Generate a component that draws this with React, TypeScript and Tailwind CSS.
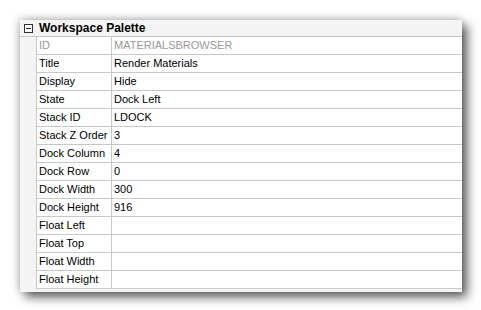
import React from "react";

const rows: [string, string][] = [
  ["ID", "MATERIALSBROWSER"],
  ["Title", "Render Materials"],
  ["Display", "Hide"],
  ["State", "Dock Left"],
  ["Stack ID", "LDOCK"],
  ["Stack Z Order", "3"],
  ["Dock Column", "4"],
  ["Dock Row", "0"],
  ["Dock Width", "300"],
  ["Dock Height", "916"],
  ["Float Left", ""],
  ["Float Top", ""],
  ["Float Width", ""],
  ["Float Height", ""],
];

export default function App() {
  return (
    <div
      className="w-[481px] h-[310px] bg-white pt-[20px] pl-[20px]"
      style={{ fontFamily: '"Liberation Sans", Arial, sans-serif' }}
    >
      <div className="w-[442px] h-[272px] bg-[#f4f4f4] shadow-[5px_5px_10px_rgba(0,0,0,0.65),-2px_-2px_8px_rgba(0,0,0,0.18)] flex flex-col">
        <div className="h-[17px] flex items-center border-b border-[#c8c8c8]">
          <div className="w-[16px] flex justify-center items-center">
            <div className="w-[9px] h-[9px] border border-[#333] bg-white flex items-center justify-center">
              <div className="w-[5px] h-[1px] bg-[#222]" />
            </div>
          </div>
          <span className="ml-[3px] text-[12px] font-bold text-black leading-none whitespace-nowrap">
            Workspace Palette
          </span>
        </div>
        <div className="flex flex-col ml-[16px] border-l border-[#c8c8c8] bg-white">
          {rows.map(([k, v], i) => (
            <div key={i} className="h-[18px] flex border-b border-[#c8c8c8] text-[11px] leading-none">
              <div
                className={`w-[75px] shrink-0 pl-[2px] flex items-center whitespace-nowrap border-r border-[#c8c8c8] ${
                  i === 0 ? "text-[#9a9a9a]" : "text-black"
                }`}
              >
                {k}
              </div>
              <div
                className={`flex-1 pl-[2px] flex items-center whitespace-nowrap ${
                  i === 0 ? "text-[#9a9a9a]" : "text-black"
                }`}
              >
                {v}
              </div>
            </div>
          ))}
        </div>
      </div>
    </div>
  );
}
